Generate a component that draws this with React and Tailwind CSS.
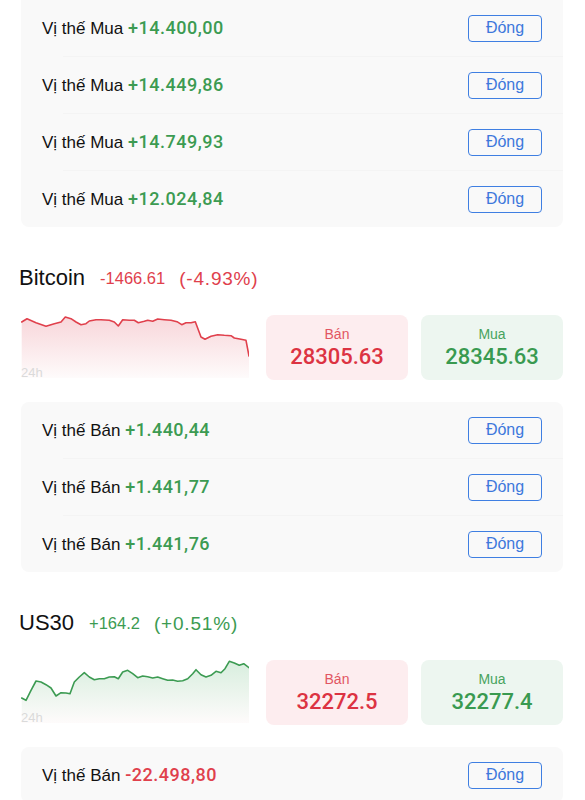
import React from 'react';

const FONT = { fontFamily: '"Liberation Sans", Arial, sans-serif' };
const NUM = { fontFamily: 'Roboto, "Liberation Sans", Arial, sans-serif' };

const BTC_POINTS = [
  [0.7, 7], [6, 3.7], [15, 7.7], [25, 11.3], [33.3, 8.7], [40, 7], [44.3, 2], [50, 3.7], [55, 7], [60, 9.7],
  [65, 8.7], [68.3, 6], [75, 4.7], [80, 4.7], [88.3, 5.3], [93.3, 7], [97.3, 11], [101.7, 4.7], [108.3, 5.3],
  [113.3, 5.3], [117.3, 7.7], [123.3, 6.3], [126.7, 5.3], [131.7, 6.3], [136.7, 4], [143.3, 4.7], [150, 5.3],
  [156, 6.7], [160.7, 9.7], [165, 7.7], [170, 7.7], [174.3, 6.7], [180, 22], [184, 24.3], [190, 21.3],
  [196.7, 19.7], [203.3, 20.3], [210, 20.7], [213.3, 23], [220, 24.3], [225, 25.3], [228, 41],
];

const US30_POINTS = [
  [0.7, 38], [5, 40.3], [10, 30.3], [15, 21], [20, 22], [25, 24.7], [30, 28], [35, 36], [40, 32.7], [45, 33],
  [49, 33.7], [53.3, 22], [58.3, 17], [63.3, 12.7], [68.3, 17], [73.3, 19.7], [78.3, 18.7], [83.3, 18.7],
  [88.3, 17], [93.3, 16.7], [97.3, 18.7], [101.7, 12], [106.7, 10.3], [111.7, 13.7], [116.7, 17.7],
  [121.7, 16], [126.7, 16.7], [131.7, 18], [136.7, 17], [141.7, 18.7], [146.7, 20.3], [151.7, 20],
  [156.7, 21.3], [161.7, 20.7], [166.7, 18.7], [171.7, 13.7], [175, 9.7], [180, 14.7], [185, 17],
  [190, 15.3], [195, 11.3], [200, 12.7], [204, 8.7], [208.3, 1.3], [213.3, 3], [218.3, 5.3], [222.7, 3.7],
  [228, 7.7],
];

function Sparkline({ id, points, stroke, fillTop, fillBottom }) {
  const line = points.map(([x, y], i) => `${i ? 'L' : 'M'}${x} ${y + 2}`).join(' ');
  const first = points[0];
  const last = points[points.length - 1];
  const area = `${line} L${last[0]} 65 L${first[0]} 65 Z`;
  return (
    <div className="relative w-[228px] h-[65px] shrink-0">
      <svg width="228" height="65" viewBox="0 0 228 65" className="block">
        <defs>
          <linearGradient id={id} x1="0" y1="0" x2="0" y2="1">
            <stop offset="0" stopColor={fillTop} />
            <stop offset="1" stopColor={fillBottom} />
          </linearGradient>
        </defs>
        <path d={area} fill={`url(#${id})`} />
        <path d={line} fill="none" stroke={stroke} strokeWidth="1.6" strokeLinejoin="round" strokeLinecap="round" />
      </svg>
      <span className="absolute left-0 bottom-[-3px] text-[13px] leading-[16px] text-[#dadada]">24h</span>
    </div>
  );
}

function PositionCard({ rows, roundTop = true }) {
  return (
    <div className={`bg-[#f9f9f9] ${roundTop ? 'rounded-[8px]' : 'rounded-b-[8px]'}`}>
      {rows.map((r, i) => (
        <div key={i}>
          {i > 0 && <div className="ml-[42px] h-px bg-[#f4f4f4]" />}
          <div className="h-[56px] flex items-center justify-between px-[21px]">
            <p className="text-[17px] text-[#111] whitespace-nowrap">
              {r.label}{' '}
              <span
                style={NUM}
                className={`text-[18px] font-medium tracking-[0.5px] ${r.value.startsWith('-') ? 'text-[#e0404c]' : 'text-[#3c9b52]'}`}
              >
                {r.value}
              </span>
            </p>
            <button className="w-[74px] h-[27px] rounded-[4px] border-[1.5px] border-[#3f7fe2] text-[16px] leading-none text-[#3d78dc] bg-transparent">
              Đóng
            </button>
          </div>
        </div>
      ))}
    </div>
  );
}

function QuoteSection({ name, change, pct, up, chartId, points, sell, buy }) {
  const tone = up ? 'text-[#3c9b52]' : 'text-[#e0404c]';
  return (
    <div>
      <div className="mt-[38px] ml-[-2px] h-[26px] flex items-center">
        <span className="text-[22px] text-[#111] leading-none">{name}</span>
        <span className={`ml-[15px] text-[16.5px] leading-none ${tone}`}>{change}</span>
        <span className={`ml-[14px] text-[19px] tracking-[0.8px] leading-none ${tone}`}>{pct}</span>
      </div>
      <div className="mt-[22px] flex">
        <Sparkline
          id={chartId}
          points={points}
          stroke={up ? '#3c9b52' : '#e0404c'}
          fillTop={up ? '#d8eede' : '#f8d6da'}
          fillBottom="#fefbfb"
        />
        <div className="ml-[17px] mt-[2px] flex gap-[13px] flex-1">
          <div className="w-[142px] h-[65px] rounded-[8px] bg-[#fdedef] flex flex-col items-center justify-center">
            <span className="text-[14px] leading-[17px] text-[#e25562]">Bán</span>
            <span style={NUM} className="mt-[1px] text-[22px] leading-[26px] font-medium text-[#dc3342]">{sell}</span>
          </div>
          <div className="w-[142px] h-[65px] rounded-[8px] bg-[#edf6f0] flex flex-col items-center justify-center">
            <span className="text-[14px] leading-[17px] text-[#47a35d]">Mua</span>
            <span style={NUM} className="mt-[1px] text-[22px] leading-[26px] font-medium text-[#399a50]">{buy}</span>
          </div>
        </div>
      </div>
      <div className="h-[22px]" />
    </div>
  );
}

export default function App() {
  return (
    <div className="min-h-[800px] bg-white pl-[21px] pr-[22px] overflow-hidden" style={FONT}>
      <PositionCard
        roundTop={false}
        rows={[
          { label: 'Vị thế Mua', value: '+14.400,00' },
          { label: 'Vị thế Mua', value: '+14.449,86' },
          { label: 'Vị thế Mua', value: '+14.749,93' },
          { label: 'Vị thế Mua', value: '+12.024,84' },
        ]}
      />

      <QuoteSection
        name="Bitcoin"
        change="-1466.61"
        pct="(-4.93%)"
        up={false}
        chartId="btc"
        points={BTC_POINTS}
        sell="28305.63"
        buy="28345.63"
      />
      <PositionCard
        rows={[
          { label: 'Vị thế Bán', value: '+1.440,44' },
          { label: 'Vị thế Bán', value: '+1.441,77' },
          { label: 'Vị thế Bán', value: '+1.441,76' },
        ]}
      />

      <QuoteSection
        name="US30"
        change="+164.2"
        pct="(+0.51%)"
        up
        chartId="us30"
        points={US30_POINTS}
        sell="32272.5"
        buy="32277.4"
      />
      <PositionCard rows={[{ label: 'Vị thế Bán', value: '-22.498,80' }]} />
    </div>
  );
}
